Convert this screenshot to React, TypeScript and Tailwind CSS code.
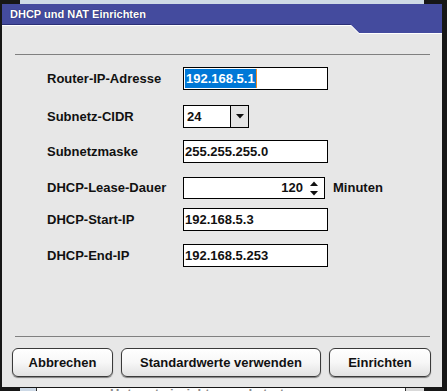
const font = "font-[family-name:'Liberation_Sans',Arial,sans-serif]";

function Field({ children, w = "w-[145px]" }: { children: React.ReactNode; w?: string }) {
  return (
    <div className={`${w} h-[23px] border border-black bg-white flex items-center pl-[1px] text-[13px] font-bold text-[#111]`}>
      {children}
    </div>
  );
}

function Row({ label, mt, children }: { label: string; mt: string; children: React.ReactNode }) {
  return (
    <div className={`flex items-center ${mt}`}>
      <div className="w-[136px] text-[13px] font-bold text-[#111]">{label}</div>
      {children}
    </div>
  );
}

function Btn({ label, w }: { label: string; w: string }) {
  return (
    <div
      className={`${w} h-[29px] rounded-[6px] border border-[#3a3a3a] bg-gradient-to-b from-white via-[#f7f7f7] to-[#e2e2e2] shadow-[0_1px_1px_rgba(0,0,0,0.45)] flex items-center justify-center text-[13px] font-bold text-[#111]`}
    >
      {label}
    </div>
  );
}

export default function App() {
  return (
    <div className={`w-[447px] h-[391px] bg-[#171717] overflow-hidden ${font}`}>
      {/* background window peeking above */}
      <div className="h-[4px] flex">
        <div className="w-[20px]" />
        <div className="w-[404px] bg-[#cfdbe6]" />
      </div>

      {/* dialog */}
      <div className="ml-[2px] w-[440px] h-[383px] bg-[#e7e7e7] flex flex-col">
        <div className="h-[20px] bg-[#444b9e] flex items-center pl-[8px] text-[11px] font-bold text-white [text-shadow:0_0_1px_#1a1d4a]">
          DHCP und NAT Einrichten
        </div>
        {/* tab step under the title */}
        <svg width="440" height="10" className="block">
          <rect x="0" y="0" width="350" height="1" fill="#2b3075" />
          <rect x="0" y="1" width="350" height="1" fill="#ffffff" />
          <polygon points="348,0 440,0 440,9 357,9" fill="#444b9e" />
          <polyline points="349,1.5 357,9.5 440,9.5" fill="none" stroke="#ffffff" strokeWidth="1" />
        </svg>

        <div className="mt-[20px] ml-[13px] w-[415px] h-px bg-[#808080]" />

        {/* form */}
        <div className="pl-[45px] mt-[12px] flex flex-col">
          <Row label="Router-IP-Adresse" mt="mt-0">
            <Field>
              <span className="bg-[#0078d7] text-white leading-[19px] px-[1px]">192.168.5.1</span>
              <span className="w-px h-[19px] bg-[#f08a24]" />
            </Field>
          </Row>
          <Row label="Subnetz-CIDR" mt="mt-[15px]">
            <div className="w-[66px] h-[23px] border border-black bg-white flex text-[13px] font-bold text-[#111]">
              <div className="flex-1 flex items-center pl-[3px]">24</div>
              <div className="w-[18px] border-l border-black bg-[#e4e4e4] flex items-center justify-center">
                <svg width="8" height="5" viewBox="0 0 8 5">
                  <polygon points="0,0 8,0 4,4.5" fill="#111" />
                </svg>
              </div>
            </div>
          </Row>
          <Row label="Subnetzmaske" mt="mt-[12px]">
            <Field>255.255.255.0</Field>
          </Row>
          <Row label="DHCP-Lease-Dauer" mt="mt-[14px]">
            <div className="w-[142px] h-[22px] border border-black bg-white flex items-center text-[13px] font-bold text-[#111]">
              <div className="flex-1 text-right">120</div>
              <div className="w-[21px] flex flex-col items-center gap-[5px] pl-[1px]">
                <svg width="8" height="5" viewBox="0 0 8 5">
                  <polygon points="0,5 8,5 4,0.5" fill="#111" />
                </svg>
                <svg width="8" height="5" viewBox="0 0 8 5">
                  <polygon points="0,0 8,0 4,4.5" fill="#111" />
                </svg>
              </div>
            </div>
            <div className="ml-[8px] text-[13px] font-bold text-[#111]">Minuten</div>
          </Row>
          <Row label="DHCP-Start-IP" mt="mt-[9px]">
            <Field>192.168.5.3</Field>
          </Row>
          <Row label="DHCP-End-IP" mt="mt-[13px]">
            <Field>192.168.5.253</Field>
          </Row>
        </div>

        <div className="mt-auto ml-[13px] w-[415px] h-px bg-[#808080]" />

        {/* buttons */}
        <div className="mt-[11px] mb-[10px] ml-[10px] flex gap-[8px]">
          <Btn label="Abbrechen" w="w-[101px]" />
          <Btn label="Standardwerte verwenden" w="w-[200px]" />
          <Btn label="Einrichten" w="w-[102px]" />
        </div>
      </div>

      {/* window underneath, mostly hidden */}
      <div className="mt-[1px] h-[3px] flex">
        <div className="w-[20px]" />
        <div className="w-[16px] bg-[#cdd9e6]" />
        <div className="w-px bg-[#333]" />
        <div className="w-[368px] bg-white overflow-hidden pl-[73px]">
          <div className="text-[13px] leading-[12px] font-bold text-[#8a8a8a] whitespace-nowrap">
            Hotspot einrichten und starten
          </div>
        </div>
        <div className="w-px bg-[#333]" />
        <div className="w-[18px] bg-[#d9d9d9]" />
      </div>
    </div>
  );
}
